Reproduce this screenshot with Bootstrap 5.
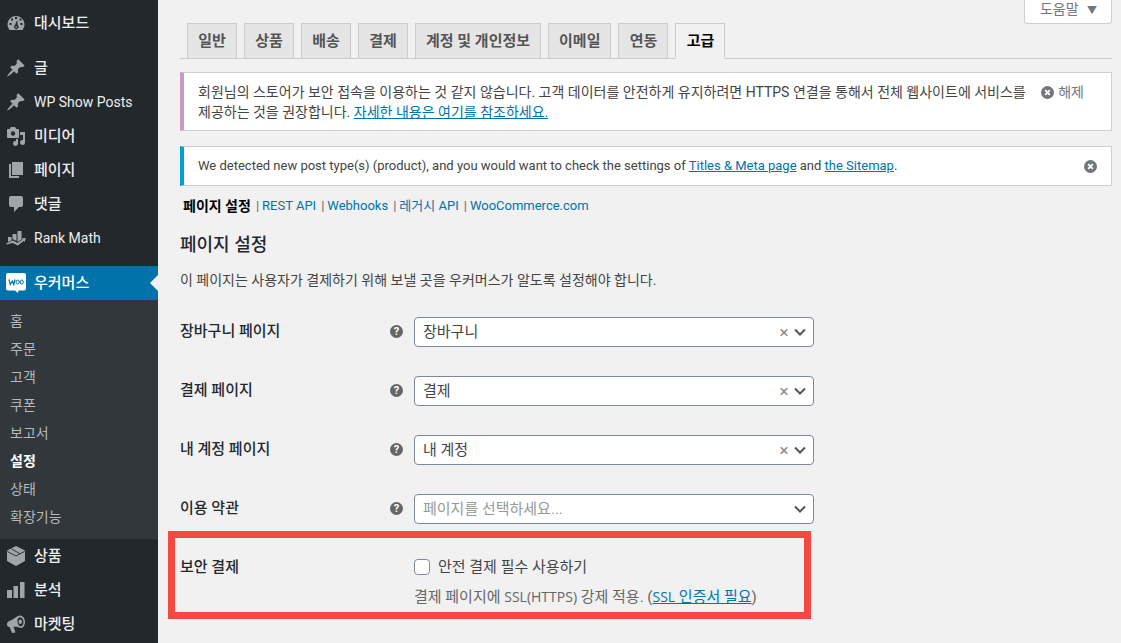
<!DOCTYPE html>
<html lang="ko">
<head>
<meta charset="utf-8">
<meta name="viewport" content="width=device-width, initial-scale=1">
<title>우커머스 설정</title>
<link href="https://cdn.jsdelivr.net/npm/bootstrap@5.3.0/dist/css/bootstrap.min.css" rel="stylesheet">
<style>
  body { background: #f1f1f1; color: #444; font: 14px/20px Roboto, "Noto Sans CJK KR", sans-serif; word-break: keep-all; }
  a { color: #0073aa; }
  h2 { font-size: 18px; line-height: 24px; color: #23282d; }

  /* Admin menu */
  .admin-menu { width: 158px; background: #23282d; padding-top: 6px; }
  .menu-link { display: flex; align-items: center; gap: 8px; height: 34px; padding-left: 6px; color: #eee; font-size: 15px; font-weight: 500; text-decoration: none; }
  .menu-link.latin { font-size: 14px; font-weight: 400; }
  .menu-link svg { width: 20px; height: 20px; fill: #a0a5aa; flex: none; }
  .menu-link.current { position: relative; background: #0073aa; color: #fff; }
  .menu-link.current::after { content: ""; position: absolute; right: 0; top: 9px; border: 8px solid transparent; border-right-color: #f1f1f1; border-left: 0; }
  .menu-gap { height: 11px; }
  .sub-menu { background: #32373c; padding: 7px 0 8px; }
  .sub-menu a { display: block; padding: 4px 10px; color: #b4b9be; text-decoration: none; }
  .sub-menu a.current { color: #fff; font-weight: 700; }

  /* Content */
  .admin-main { min-width: 0; padding: 0 9px 0 22px; }
  .help-btn { height: 24px; margin-bottom: -1px; padding: 0 14px 5px 15px; background: #fff; border: 1px solid #ccd0d4; border-top: 0; border-radius: 0 0 4px 4px; color: #72777c; line-height: 18px; }
  .help-btn span { font-size: 10px; margin-left: 5px; }
  .tab-bar { gap: 7px; padding-left: 7px; border-bottom: 1px solid #ccc; }
  .tab-bar a { min-width: 50px; padding: 5px 10px; margin-bottom: -1px; line-height: 24px; text-align: center; border: 1px solid #ccc; background: #e5e5e5; color: #555; font-size: 15px; font-weight: 600; text-decoration: none; }
  .tab-bar a.active { background: #f1f1f1; border-bottom-color: #f1f1f1; color: #000; }

  .notice { background: #fff; border: 1px solid #ccd0d4; border-left: 4px solid #00a0d2; padding: 9px 14px; margin-top: 15px; }
  .notice.woo { border-left-color: #cc99c2; margin-top: 13px; padding: 9px 27px 8px 14px; }
  .notice.latin { font-size: 13px; }
  .dismiss { display: flex; align-items: center; gap: 4px; height: 20px; padding: 0; border: 0; background: none; color: #72777c; }
  .dismiss svg { width: 13px; height: 13px; fill: #72777c; flex: none; }

  .section-links { gap: 5px; padding-left: 3px; margin-top: 10px; font-size: 13px; }
  .section-links li + li::before { content: "|"; color: #666; margin-right: 3px; }
  .section-links a { text-decoration: none; }
  .section-links .current { font-size: 14px; font-weight: 700; color: #000; }

  /* Settings form */
  .settings { max-width: 634px; margin-top: 15px; }
  .setting { display: flex; align-items: flex-start; padding: 15px 0 14px; font-size: 15px; }
  .setting-name { width: 210px; padding-top: 4px; font-weight: 500; color: #23282d; }
  .tip { width: 13px; height: 13px; margin: 8px 11px 0 0; border-radius: 50%; background: #666; color: #fff; font-size: 11px; font-weight: 700; line-height: 13px; text-align: center; }
  .page-select { height: 30px; padding: 0 56px 0 8px; border: 1px solid #7e8993; border-radius: 4px; color: #444; font-size: 15px; line-height: 26px;
    background: #fff url("data:image/svg+xml,%3Csvg xmlns='http://www.w3.org/2000/svg' viewBox='0 0 12 8'%3E%3Cpath d='M1 1.5l5 5 5-5' fill='none' stroke='%23555' stroke-width='2'/%3E%3C/svg%3E") no-repeat right 7px center / 12px 8px; }
  .page-select.empty { color: #999; }
  .clear-btn { position: absolute; top: 5px; right: 23px; width: 14px; height: 20px; padding: 0; border: 0; background: none; color: #888; font-size: 17px; line-height: 20px; }
  .setting.marked { position: relative; padding-bottom: 5px; }
  .setting.marked::after { content: ""; position: absolute; inset: -7px 3px -7px -12px; border: 7px solid #f54842; pointer-events: none; }
  .ssl-check { width: 16px; height: 16px; margin: 0; border: 1px solid #7e8993; }
  .hint { color: #666; margin-top: 10px; }
  .hint .latin { font-family: "Open Sans", sans-serif; font-size: 14px; }
</style>
</head>
<body>
<div class="d-flex align-items-stretch min-vh-100">
  <nav class="admin-menu flex-shrink-0" aria-label="관리자 메뉴">
    <a class="menu-link" href="#"><svg viewBox="0 0 20 20"><path fill-rule="evenodd" d="M3.500 17A8.500 8.500 0 1 1 16.500 17zM9 4v2h2V4zM5 5.500v2h2v-2zM13.500 5.500v2h2v-2zM3.500 10v2h2v-2zM14.500 10v2h2v-2zM11.300 7L9 12a2.200 2.200 0 1 0 2.600 0zM9.500 13h1.200v1.800H9.500z"/></svg>대시보드</a>
    <div class="menu-gap"></div>
    <a class="menu-link" href="#"><svg viewBox="0 0 20 20"><path d="M10.440 3.020l1.820-1.820 6.360 6.350-1.830 1.820c-1.050-.68-2.480-.57-3.410.36l-.75.750c-.92.930-1.040 2.350-.35 3.410l-1.830 1.820-2.410-2.410-2.800 2.790c-.42.420-3.380 2.710-3.800 2.290s1.860-3.390 2.280-3.810l2.790-2.790L4.100 9.360l1.830-1.820c1.050.69 2.480.57 3.400-.36l.75-.75c.93-.92 1.050-2.350.36-3.410z"/></svg>글</a>
    <a class="menu-link latin" href="#"><svg viewBox="0 0 20 20"><path d="M10.440 3.020l1.820-1.820 6.360 6.350-1.830 1.820c-1.050-.68-2.480-.57-3.410.36l-.75.750c-.92.930-1.040 2.350-.35 3.410l-1.830 1.820-2.410-2.410-2.800 2.790c-.42.420-3.380 2.710-3.800 2.290s1.860-3.390 2.280-3.810l2.790-2.790L4.100 9.360l1.830-1.820c1.050.69 2.480.57 3.400-.36l.75-.75c.93-.92 1.050-2.350.36-3.410z"/></svg>WP Show Posts</a>
    <a class="menu-link" href="#"><svg viewBox="0 0 20 20"><path fill-rule="evenodd" d="M13 11V4c0-.55-.45-1-1-1h-1.670L9 1H5L3.670 3H2c-.55 0-1 .45-1 1v7c0 .550.450 1 1 1h10c.550 0 1-.450 1-1zM7 5.300a2.200 2.200 0 1 1 0 4.400 2.200 2.200 0 0 1 0-4.400z"/><path d="M14 6h5v10.500a2.500 2.500 0 1 1-2-2.450V9h-3zM12 13v4.500a2.500 2.500 0 1 1-2-2.450V13z"/></svg>미디어</a>
    <a class="menu-link" href="#"><svg viewBox="0 0 20 20"><path d="M6 15V2h11v13zM5 16h8v2H3V4h2z"/></svg>페이지</a>
    <a class="menu-link" href="#"><svg viewBox="0 0 20 20"><path d="M5 2h10q2 0 2 2v7q0 2-2 2h-2l-5 5v-5H5q-2 0-2-2V4q0-2 2-2z"/></svg>댓글</a>
    <a class="menu-link latin" href="#"><svg viewBox="0 0 20 20"><path d="M2 9h3.500v3.500L2 14zM6.500 6h4v7L6.500 11zM11.500 3H15.500v8.500l-4 2.500z"/><path d="M0 15.500l7-3 4.500 2.500 5-3.500-.8-1.200 4.300-.3-1.500 4-.8-1-6 4.500-5-2.500-6 1.500z"/></svg>Rank Math</a>
    <div class="menu-gap"></div>
    <a class="menu-link current" href="#" aria-current="true"><svg viewBox="0 0 20 20"><path fill="#fff" d="M2 0h16q2 0 2 2v13.500q0 2-2 2h-5.500l-.5 2.500-3-2.500H2q-2 0-2-2V2q0-2 2-2z"/><path d="M3 6.500l1.200 5L6.300 8l1.500 3.500L9 6.500" fill="none" stroke="#0073aa" stroke-width="1.200"/><ellipse cx="11.600" cy="9" rx="1.600" ry="2" fill="none" stroke="#0073aa"/><ellipse cx="15.700" cy="9" rx="1.600" ry="2" fill="none" stroke="#0073aa"/></svg>우커머스</a>
    <div class="sub-menu">
      <a href="#">홈</a>
      <a href="#">주문</a>
      <a href="#">고객</a>
      <a href="#">쿠폰</a>
      <a href="#">보고서</a>
      <a href="#" class="current" aria-current="page">설정</a>
      <a href="#">상태</a>
      <a href="#">확장기능</a>
    </div>
    <a class="menu-link" href="#"><svg viewBox="0 0 20 20"><path d="M10 0l9 4.500v10.500L10 20l-9-5V4.500z"/><path d="M1.500 5.500L10 10l8.500-4.500M5.500 3l8.500 4.700" fill="none" stroke="#23282d" stroke-width=".9"/></svg>상품</a>
    <a class="menu-link" href="#"><svg viewBox="0 0 20 20"><path d="M1 10h5v8H1zM7.500 6h4.500v12H7.500zM14 2h4.500v16H14z"/></svg>분석</a>
    <a class="menu-link" href="#"><svg viewBox="0 0 20 20"><path fill-rule="evenodd" d="M14 1.500c3 0 5 3.200 5 6.500s-2 6-4 6c-2.500-.6-4.500-1.500-7.500-1.200l2 5.700-3.500.5-2.200-5.800C1.500 13 .8 11.500 1 10s.8-2.500 2.500-3C8 5.500 11 1.500 14 1.500zm0 1.700c-2 0-2.700 2.300-2.500 4.500.2 2.500 1.700 4.600 3.200 4.600s2.800-1.800 2.800-4.300-1.500-4.800-3.500-4.800z"/><ellipse cx="14.300" cy="7.700" rx="1.700" ry="2.200"/></svg>마켓팅</a>
  </nav>

  <main class="admin-main flex-grow-1">
    <div class="d-flex justify-content-end">
      <button type="button" class="help-btn">도움말 <span>▼</span></button>
    </div>
    <nav class="tab-bar d-flex" aria-label="설정 탭">
      <a href="#">일반</a>
      <a href="#">상품</a>
      <a href="#">배송</a>
      <a href="#">결제</a>
      <a href="#">계정 및 개인정보</a>
      <a href="#">이메일</a>
      <a href="#">연동</a>
      <a href="#" class="active" aria-current="page">고급</a>
    </nav>

    <div class="notice woo d-flex">
      <p class="mb-0 flex-grow-1">회원님의 스토어가 보안 접속을 이용하는 것 같지 않습니다. 고객 데이터를 안전하게 유지하려면 HTTPS 연결을 통해서 전체 웹사이트에 서비스를 제공하는 것을 권장합니다. <a href="#">자세한 내용은 여기를 참조하세요.</a></p>
      <button type="button" class="dismiss flex-shrink-0"><svg viewBox="0 0 14 14"><circle cx="7" cy="7" r="7"/><path d="M4.500 4.500l5 5m0-5l-5 5" stroke="#fff" stroke-width="2"/></svg>해제</button>
    </div>
    <div class="notice latin d-flex">
      <p class="mb-0 flex-grow-1">We detected new post type(s) (product), and you would want to check the settings of <a href="#">Titles &amp; Meta page</a> and <a href="#">the Sitemap</a>.</p>
      <button type="button" class="dismiss flex-shrink-0" aria-label="이 알림 무시하기"><svg viewBox="0 0 14 14"><circle cx="7" cy="7" r="7"/><path d="M4.500 4.500l5 5m0-5l-5 5" stroke="#fff" stroke-width="2"/></svg></button>
    </div>

    <ul class="section-links list-unstyled d-flex mb-0">
      <li><a href="#" class="current" aria-current="page">페이지 설정</a></li>
      <li><a href="#">REST API</a></li>
      <li><a href="#">Webhooks</a></li>
      <li><a href="#">레거시 API</a></li>
      <li><a href="#">WooCommerce.com</a></li>
    </ul>

    <h2 class="mt-3 mb-0">페이지 설정</h2>
    <p class="mt-3 mb-0 lh-1">이 페이지는 사용자가 결제하기 위해 보낼 곳을 우커머스가 알도록 설정해야 합니다.</p>

    <form class="settings">
      <div class="setting">
        <label class="setting-name" for="cart">장바구니 페이지</label>
        <span class="tip">?</span>
        <div class="position-relative flex-grow-1">
          <select class="form-select page-select" id="cart"><option>장바구니</option></select>
          <button type="button" class="clear-btn" aria-label="지우기">×</button>
        </div>
      </div>
      <div class="setting">
        <label class="setting-name" for="checkout">결제 페이지</label>
        <span class="tip">?</span>
        <div class="position-relative flex-grow-1">
          <select class="form-select page-select" id="checkout"><option>결제</option></select>
          <button type="button" class="clear-btn" aria-label="지우기">×</button>
        </div>
      </div>
      <div class="setting">
        <label class="setting-name" for="account">내 계정 페이지</label>
        <span class="tip">?</span>
        <div class="position-relative flex-grow-1">
          <select class="form-select page-select" id="account"><option>내 계정</option></select>
          <button type="button" class="clear-btn" aria-label="지우기">×</button>
        </div>
      </div>
      <div class="setting">
        <label class="setting-name" for="terms">이용 약관</label>
        <span class="tip">?</span>
        <div class="flex-grow-1">
          <select class="form-select page-select empty" id="terms"><option>페이지를 선택하세요...</option></select>
        </div>
      </div>
      <div class="setting marked">
        <span class="setting-name me-4">보안 결제</span>
        <div class="flex-grow-1 pt-1">
          <div class="d-flex align-items-center gap-2">
            <input class="form-check-input ssl-check" type="checkbox" id="force-ssl">
            <label for="force-ssl">안전 결제 필수 사용하기</label>
          </div>
          <p class="hint mb-0">결제 페이지에 <span class="latin">SSL(HTTPS)</span> 강제 적용. (<a href="#"><span class="latin">SSL</span> 인증서 필요</a>)</p>
        </div>
      </div>
    </form>
  </main>
</div>
<script src="https://cdn.jsdelivr.net/npm/bootstrap@5.3.0/dist/js/bootstrap.bundle.min.js"></script>
</body>
</html>
